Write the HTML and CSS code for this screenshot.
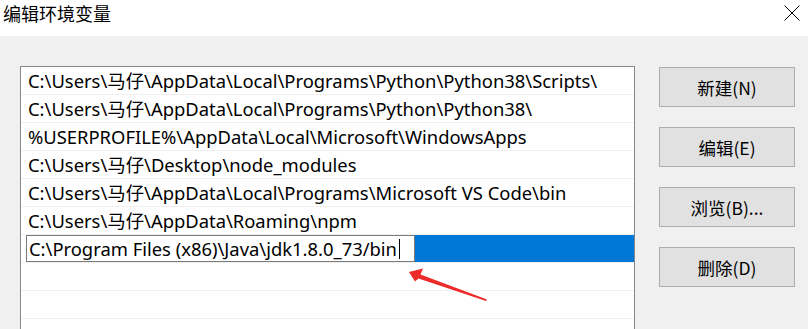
FILE: index.html
```html
<!DOCTYPE html>
<html lang="zh-CN">

<head>
  <meta charset="UTF-8">
  <meta name="viewport" content="width=device-width, initial-scale=1.0">
  <title>编辑环境变量</title>
  <link rel="stylesheet" href="styles.css">
</head>

<body>
  <div class="title-bar">
    <span class="title-text">编辑环境变量</span>
    <svg class="close-icon" width="16" height="16" viewBox="0 0 16 16">
      <path d="M0.5 0.5 L15.5 15.5 M15.5 0.5 L0.5 15.5" stroke="#000" stroke-width="1" fill="none" />
    </svg>
  </div>

  <div class="dialog-main">
    <div class="path-list">
      <div class="path-row">C:\Users\马仔\AppData\Local\Programs\Python\Python38\Scripts\</div>
      <div class="path-row">C:\Users\马仔\AppData\Local\Programs\Python\Python38\</div>
      <div class="path-row">%USERPROFILE%\AppData\Local\Microsoft\WindowsApps</div>
      <div class="path-row">C:\Users\马仔\Desktop\node_modules</div>
      <div class="path-row">C:\Users\马仔\AppData\Local\Programs\Microsoft VS Code\bin</div>
      <div class="path-row">C:\Users\马仔\AppData\Roaming\npm</div>
      <div class="path-row selected">
        <div class="edit-box">C:\Program Files (x86)\Java\jdk1.8.0_73/bin<span class="caret"></span></div>
        <div class="select-fill"></div>
      </div>
      <div class="path-row"></div>
      <div class="path-row"></div>
      <div class="path-row"></div>

      <!-- 标注箭头 -->
      <svg class="arrow" width="100" height="50" viewBox="0 0 100 50">
        <polygon points="9,12 23,8.5 20.5,14.5 87,39.5 86,41 18.5,18.5 15,21.5" fill="#ee2b2b" />
      </svg>
    </div>

    <div class="button-col">
      <button class="win-button">新建(N)</button>
      <button class="win-button">编辑(E)</button>
      <button class="win-button">浏览(B)...</button>
      <button class="win-button">删除(D)</button>
    </div>
  </div>
</body>

</html>
```

FILE: styles.css
```css
html,
body {
  margin: 0;
  padding: 0;
  height: 100%;
  overflow: hidden;
  background: #f0f0f0;
  font-family: "Noto Sans", "Noto Sans CJK SC", sans-serif;
  color: #000;
}

.title-bar {
  height: 36px;
  background: #fff;
  display: flex;
  align-items: flex-start;
  justify-content: space-between;
  padding: 0 8px 0 3px;
}

.title-text {
  font-size: 18px;
  line-height: 26px;
  font-family: "Noto Sans CJK SC", sans-serif;
}

.close-icon {
  margin-top: 5px;
}

.dialog-main {
  display: flex;
  gap: 24px;
  padding: 30px 0 0 20px;
}

/* 列表框延伸到窗口底部 */
.path-list {
  position: relative;
  width: 613px;
  height: 262px;
  background: #fff;
  border: 1px solid #828790;
  border-bottom: none;
  overflow: hidden;
}

.path-row {
  height: 27px;
  border-bottom: 1px solid #f0f0f0;
  padding-left: 7px;
  font-size: 18.4px;
  line-height: 27px;
  white-space: nowrap;
  display: flex;
}

.path-row.selected {
  padding-left: 5px;
}

.edit-box {
  width: 385px;
  height: 25px;
  border: 1px solid #7a7a7a;
  background: #fff;
  padding-left: 2px;
  line-height: 25px;
  display: flex;
  align-items: center;
}

.caret {
  width: 1px;
  height: 20px;
  background: #000;
  margin-left: 2px;
}

.select-fill {
  flex: 1;
  background: #0078d7;
}

.arrow {
  position: absolute;
  left: 379px;
  top: 193px;
}

.button-col {
  display: flex;
  flex-direction: column;
  gap: 20px;
  padding-top: 1px;
}

.win-button {
  width: 136px;
  height: 40px;
  background: #e1e1e1;
  border: 1px solid #adadad;
  font-family: "Noto Sans CJK SC", sans-serif;
  font-size: 17.5px;
  color: #000;
  padding: 0;
}
```
